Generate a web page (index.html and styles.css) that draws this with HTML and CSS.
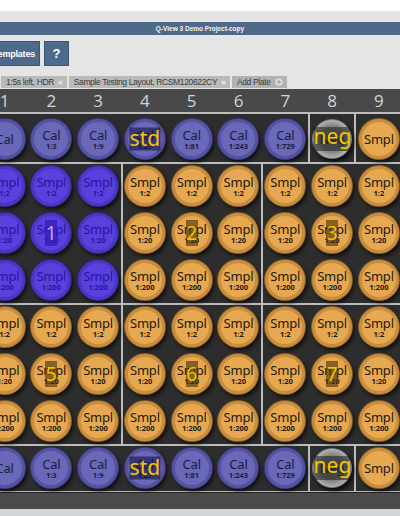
FILE: index.html
```html
<!DOCTYPE html>
<html>
<head>
<meta charset="utf-8">
<link rel="stylesheet" href="styles.css">
</head>
<body>
<div class="page">
  <div class="top-gap"></div>
  <div class="panel">
    <div class="titlebar">Q-View 3 Demo Project-copy</div>
    <div class="toolbar">
      <div class="btn tpl">Templates</div>
      <div class="btn help">?</div>
    </div>
    <div class="tabs">
      <div class="tab">1:5s left, HDR <span class="x">×</span></div>
      <div class="tab">Sample Testing Layout, RCSM120622CY <span class="x">×</span></div>
      <div class="tab add">Add Plate <span class="plus"><svg width="8" height="8" viewBox="0 0 8 8"><circle cx="4" cy="4" r="3.6" fill="#e4e4e4"/><path d="M4 1.8V6.2M1.8 4H6.2" stroke="#a8a8a8" stroke-width="1.3"/></svg></span></div>
    </div>
  </div>
  <div class="plate">
    <div class="colhead">
      <span>1</span><span>2</span><span>3</span><span>4</span><span>5</span><span>6</span><span>7</span><span>8</span><span>9</span><span>10</span>
    </div>

    <div class="row rowA">
      <div class="group g7">
        <div class="cell"><div class="well cal"><span class="n">Cal</span></div></div>
        <div class="cell"><div class="well cal"><span class="n">Cal</span><span class="d">1:3</span></div></div>
        <div class="cell"><div class="well cal"><span class="n">Cal</span><span class="d">1:9</span></div></div>
        <div class="cell"><div class="well cal"><span class="n">Cal</span><span class="d">1:27</span><span class="tag std">std</span></div></div>
        <div class="cell"><div class="well cal"><span class="n">Cal</span><span class="d">1:81</span></div></div>
        <div class="cell"><div class="well cal"><span class="n">Cal</span><span class="d">1:243</span></div></div>
        <div class="cell"><div class="well cal"><span class="n">Cal</span><span class="d">1:729</span></div></div>
      </div>
      <div class="group g1">
        <div class="cell"><div class="well neg"><span class="n">Neg</span><span class="tag negt">neg</span></div></div>
      </div>
      <div class="group g1">
        <div class="cell"><div class="well so"><span class="n">Smpl</span></div></div>
      </div>
    </div>

    <div class="row">
      <div class="group g3">
        <div class="cell"><div class="well sp"><span class="n">Smpl</span><span class="d">1:2</span></div></div>
        <div class="cell"><div class="well sp"><span class="n">Smpl</span><span class="d">1:2</span></div></div>
        <div class="cell"><div class="well sp"><span class="n">Smpl</span><span class="d">1:2</span></div></div>
        <div class="cell"><div class="well sp"><span class="n">Smpl</span><span class="d">1:20</span></div></div>
        <div class="cell"><div class="well sp"><span class="n">Smpl</span><span class="d">1:20</span><span class="tag num numb">1</span></div></div>
        <div class="cell"><div class="well sp"><span class="n">Smpl</span><span class="d">1:20</span></div></div>
        <div class="cell"><div class="well sp"><span class="n">Smpl</span><span class="d">1:200</span></div></div>
        <div class="cell"><div class="well sp"><span class="n">Smpl</span><span class="d">1:200</span></div></div>
        <div class="cell"><div class="well sp"><span class="n">Smpl</span><span class="d">1:200</span></div></div>
      </div>
      <div class="group g3">
        <div class="cell"><div class="well so"><span class="n">Smpl</span><span class="d">1:2</span></div></div>
        <div class="cell"><div class="well so"><span class="n">Smpl</span><span class="d">1:2</span></div></div>
        <div class="cell"><div class="well so"><span class="n">Smpl</span><span class="d">1:2</span></div></div>
        <div class="cell"><div class="well so"><span class="n">Smpl</span><span class="d">1:20</span></div></div>
        <div class="cell"><div class="well so"><span class="n">Smpl</span><span class="d">1:20</span><span class="tag num">2</span></div></div>
        <div class="cell"><div class="well so"><span class="n">Smpl</span><span class="d">1:20</span></div></div>
        <div class="cell"><div class="well so"><span class="n">Smpl</span><span class="d">1:200</span></div></div>
        <div class="cell"><div class="well so"><span class="n">Smpl</span><span class="d">1:200</span></div></div>
        <div class="cell"><div class="well so"><span class="n">Smpl</span><span class="d">1:200</span></div></div>
      </div>
      <div class="group g3">
        <div class="cell"><div class="well so"><span class="n">Smpl</span><span class="d">1:2</span></div></div>
        <div class="cell"><div class="well so"><span class="n">Smpl</span><span class="d">1:2</span></div></div>
        <div class="cell"><div class="well so"><span class="n">Smpl</span><span class="d">1:2</span></div></div>
        <div class="cell"><div class="well so"><span class="n">Smpl</span><span class="d">1:20</span></div></div>
        <div class="cell"><div class="well so"><span class="n">Smpl</span><span class="d">1:20</span><span class="tag num">3</span></div></div>
        <div class="cell"><div class="well so"><span class="n">Smpl</span><span class="d">1:20</span></div></div>
        <div class="cell"><div class="well so"><span class="n">Smpl</span><span class="d">1:200</span></div></div>
        <div class="cell"><div class="well so"><span class="n">Smpl</span><span class="d">1:200</span></div></div>
        <div class="cell"><div class="well so"><span class="n">Smpl</span><span class="d">1:200</span></div></div>
      </div>
    </div>

    <div class="row">
      <div class="group g3">
        <div class="cell"><div class="well so"><span class="n">Smpl</span><span class="d">1:2</span></div></div>
        <div class="cell"><div class="well so"><span class="n">Smpl</span><span class="d">1:2</span></div></div>
        <div class="cell"><div class="well so"><span class="n">Smpl</span><span class="d">1:2</span></div></div>
        <div class="cell"><div class="well so"><span class="n">Smpl</span><span class="d">1:20</span></div></div>
        <div class="cell"><div class="well so"><span class="n">Smpl</span><span class="d">1:20</span><span class="tag num">5</span></div></div>
        <div class="cell"><div class="well so"><span class="n">Smpl</span><span class="d">1:20</span></div></div>
        <div class="cell"><div class="well so"><span class="n">Smpl</span><span class="d">1:200</span></div></div>
        <div class="cell"><div class="well so"><span class="n">Smpl</span><span class="d">1:200</span></div></div>
        <div class="cell"><div class="well so"><span class="n">Smpl</span><span class="d">1:200</span></div></div>
      </div>
      <div class="group g3">
        <div class="cell"><div class="well so"><span class="n">Smpl</span><span class="d">1:2</span></div></div>
        <div class="cell"><div class="well so"><span class="n">Smpl</span><span class="d">1:2</span></div></div>
        <div class="cell"><div class="well so"><span class="n">Smpl</span><span class="d">1:2</span></div></div>
        <div class="cell"><div class="well so"><span class="n">Smpl</span><span class="d">1:20</span></div></div>
        <div class="cell"><div class="well so"><span class="n">Smpl</span><span class="d">1:20</span><span class="tag num">6</span></div></div>
        <div class="cell"><div class="well so"><span class="n">Smpl</span><span class="d">1:20</span></div></div>
        <div class="cell"><div class="well so"><span class="n">Smpl</span><span class="d">1:200</span></div></div>
        <div class="cell"><div class="well so"><span class="n">Smpl</span><span class="d">1:200</span></div></div>
        <div class="cell"><div class="well so"><span class="n">Smpl</span><span class="d">1:200</span></div></div>
      </div>
      <div class="group g3">
        <div class="cell"><div class="well so"><span class="n">Smpl</span><span class="d">1:2</span></div></div>
        <div class="cell"><div class="well so"><span class="n">Smpl</span><span class="d">1:2</span></div></div>
        <div class="cell"><div class="well so"><span class="n">Smpl</span><span class="d">1:2</span></div></div>
        <div class="cell"><div class="well so"><span class="n">Smpl</span><span class="d">1:20</span></div></div>
        <div class="cell"><div class="well so"><span class="n">Smpl</span><span class="d">1:20</span><span class="tag num">7</span></div></div>
        <div class="cell"><div class="well so"><span class="n">Smpl</span><span class="d">1:20</span></div></div>
        <div class="cell"><div class="well so"><span class="n">Smpl</span><span class="d">1:200</span></div></div>
        <div class="cell"><div class="well so"><span class="n">Smpl</span><span class="d">1:200</span></div></div>
        <div class="cell"><div class="well so"><span class="n">Smpl</span><span class="d">1:200</span></div></div>
      </div>
    </div>

    <div class="row">
      <div class="group g7">
        <div class="cell"><div class="well cal"><span class="n">Cal</span></div></div>
        <div class="cell"><div class="well cal"><span class="n">Cal</span><span class="d">1:3</span></div></div>
        <div class="cell"><div class="well cal"><span class="n">Cal</span><span class="d">1:9</span></div></div>
        <div class="cell"><div class="well cal"><span class="n">Cal</span><span class="d">1:27</span><span class="tag std">std</span></div></div>
        <div class="cell"><div class="well cal"><span class="n">Cal</span><span class="d">1:81</span></div></div>
        <div class="cell"><div class="well cal"><span class="n">Cal</span><span class="d">1:243</span></div></div>
        <div class="cell"><div class="well cal"><span class="n">Cal</span><span class="d">1:729</span></div></div>
      </div>
      <div class="group g1">
        <div class="cell"><div class="well neg"><span class="n">Neg</span><span class="tag negt">neg</span></div></div>
      </div>
      <div class="group g1">
        <div class="cell"><div class="well so"><span class="n">Smpl</span></div></div>
      </div>
    </div>
  </div>
  <div class="footer"></div>
  <div class="bottom"></div>
</div>
</body>
</html>
```
FILE: styles.css
```css
* { box-sizing: border-box; }
body {
  margin: 0;
  width: 400px;
  height: 516px;
  overflow: hidden;
  background: #fff;
  font-family: "Liberation Sans", Arial, sans-serif;
}
.page { width: 400px; height: 516px; overflow: hidden; }
.top-gap { height: 11px; background: #fff; }
.panel {
  background: #e5e5e5;
  padding-top: 11px;
  height: 78px;
  overflow: hidden;
}
.titlebar {
  height: 13px;
  background: #4f6a89;
  color: #f2f4f7;
  font-size: 6.5px;
  font-weight: bold;
  text-align: center;
  line-height: 13px;
}
.toolbar {
  display: flex;
  gap: 4px;
  margin-top: 6px;
  margin-left: -14px;
}
.btn {
  height: 25px;
  background: #4e6a8a;
  color: #fff;
  border: 1px solid #3e5571;
  font-weight: bold;
  display: flex;
  align-items: center;
  justify-content: center;
}
.tpl { width: 54px; font-size: 9px; padding-left: 2px; letter-spacing: -0.2px; }
.help { width: 25px; font-size: 13px; }
.tabs {
  display: flex;
  gap: 2px;
  margin-top: 10px;
  padding-left: 1px;
}
.tab {
  height: 12px;
  background: #bababa;
  color: #3a3a3a;
  font-size: 8.5px;
  letter-spacing: -0.35px;
  padding: 0 4px 0 5px;
  display: flex;
  align-items: center;
  gap: 4px;
  white-space: nowrap;
}
.tab .x { color: #f4f4f4; font-weight: bold; font-size: 8px; letter-spacing: 0; }
.tab.add { background: #b3b3b3; }
.plus { display: flex; }

.plate { background: #2d2d2d; overflow: hidden; }
.colhead {
  display: flex;
  margin-left: -18.9px;
  height: 24px;
  background: #494949;
  border-bottom: 1px solid #bdbdbd;
}
.colhead span {
  flex: none;
  width: 46.8px;
  text-align: center;
  color: #d4d4d4;
  font-family: "Open Sans", sans-serif;
  font-size: 17px;
  line-height: 23px;
}
.row { display: flex; margin-left: -18.9px; }
.group {
  flex: none;
  display: grid;
  grid-auto-rows: 47px;
  box-shadow: inset 0 0 0 1px #bcbcbc;
}
.g1 { grid-template-columns: 46.8px; }
.g3 { grid-template-columns: repeat(3, 46.8px); }
.g7 { grid-template-columns: repeat(7, 46.8px); }
.rowA .group { padding-top: 2.5px; }
.cell { display: flex; align-items: center; justify-content: center; }

.well {
  width: 40px;
  height: 40px;
  border-radius: 50%;
  display: flex;
  flex-direction: column;
  align-items: center;
  justify-content: center;
  position: relative;
  font-family: "Noto Sans", sans-serif;
  padding-top: 1px;
}
.well .n { font-size: 13px; line-height: 13px; letter-spacing: -0.2px; }
.well .d { font-size: 7.5px; font-weight: bold; line-height: 9px; }
.cal {
  background: #6a68b8;
  border: 3px solid #5553a1;
  color: #1c1b44;
  box-shadow: 0 0 0 1px #3c3a78, 2px 3px 4px rgba(0,0,0,.8);
}
.sp {
  background: #5a40dc;
  border: 3px solid #4b36c2;
  color: #2616a2;
  box-shadow: 0 0 0 1px #33248a, 2px 3px 4px rgba(0,0,0,.8);
}
.so {
  background: #e7a852;
  border: 3px solid #c98d3e;
  color: #221a0c;
  box-shadow: 0 0 0 1px #8a5f24, 2px 3px 4px rgba(0,0,0,.8);
}
.neg {
  background: radial-gradient(circle, #6a6a6a 0%, #7c7c7c 45%, #bdbdbd 75%, #dadada 92%, #a8a8a8 100%);
  border: 1px solid #7a7a7a;
  color: #2a2a2a;
  box-shadow: 2px 3px 4px rgba(0,0,0,.8);
}
.tag {
  position: absolute;
  left: 50%;
  top: 50%;
  transform: translate(-50%, -50%);
  text-align: center;
  font-family: "Noto Sans", sans-serif;
}
.std {
  width: 31px;
  height: 23px;
  background: rgba(22, 22, 64, .6);
  color: #f4c700;
  font-size: 21px;
  line-height: 20px;
}
.negt {
  width: 37px;
  height: 24px;
  background: rgba(30, 30, 30, .55);
  color: #f4c700;
  font-size: 21px;
  line-height: 19px;
}
.num {
  width: 12px;
  height: 26px;
  background: rgba(70, 46, 4, .6);
  color: #f4c400;
  font-size: 19px;
  line-height: 26px;
}
.numb {
  background: rgba(52, 28, 190, .75);
  color: #c2a6ea;
}
.footer {
  height: 17.5px;
  background: #4b4b4b;
  border-top: 1px solid #222;
}
.bottom { height: 10px; background: #d2d5da; }
```
